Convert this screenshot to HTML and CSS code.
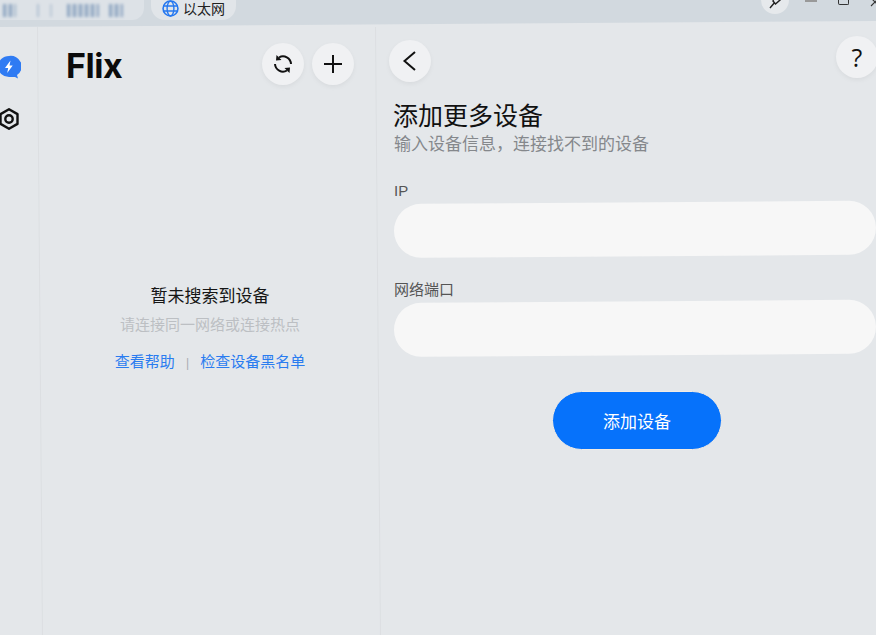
FILE: index.html
```html
<!DOCTYPE html>
<html lang="zh-CN">
<head>
    <meta charset="UTF-8">
    <title>Flix</title>
    <link rel="stylesheet" href="styles.css">
</head>
<body>
    <div class="app">
        <!-- Title bar -->
        <div class="topbar">
            <div class="tray">
                <span class="smudge s1"></span>
                <span class="smudge s2"></span>
                <span class="smudge s3"></span>
                <span class="smudge s4"></span>
                <span class="smudge s5"></span>
            </div>
            <div class="net-pill">
                <svg class="globe" viewBox="0 0 16 16" width="17" height="17">
                    <circle cx="8" cy="8" r="7" fill="none" stroke="#2678f0" stroke-width="1.5"/>
                    <ellipse cx="8" cy="8" rx="3.2" ry="7" fill="none" stroke="#2678f0" stroke-width="1.3"/>
                    <path d="M1 5.6h14M1 10.4h14" stroke="#2678f0" stroke-width="1.3"/>
                </svg>
                <span>以太网</span>
            </div>
            <div class="win-controls">
                <div class="pin">
                    <svg viewBox="0 0 16 16" width="16" height="16">
                        <path d="M9 -2L13 5L8.5 9L6 6ZM7.2 8L3 13" fill="none" stroke="#222" stroke-width="1.4"/>
                    </svg>
                </div>
                <span class="ctl-min"></span>
                <span class="ctl-max"></span>
                <svg class="ctl-close" viewBox="0 0 10 10" width="10" height="10">
                    <path d="M1 -2L9 6M9 -2L1 6" stroke="#333" stroke-width="1.1"/>
                </svg>
            </div>
        </div>

        <div class="main">
            <!-- Left rail -->
            <div class="rail">
                <svg class="rail-icon" viewBox="0 0 24 24" width="24" height="24">
                    <path d="M12 1a11 10.5 0 1 0 0 21h6l3 1.500-1-3.500a11 10.500 0 0 0-8-19z" fill="#2f7bf3"/>
                    <path d="M13.500 5.500L8 13h3.200l-1 5 5.500-7.500h-3.200z" fill="#fff"/>
                </svg>
                <svg class="rail-icon gear" viewBox="0 0 24 24" width="24" height="24">
                    <path d="M12 2.200l8.500 4.900v9.800L12 21.800l-8.500-4.900V7.100z" fill="none" stroke="#111" stroke-width="2.400" stroke-linejoin="round"/>
                    <circle cx="12" cy="12" r="3.700" fill="none" stroke="#111" stroke-width="2.400"/>
                </svg>
            </div>

            <!-- Device list -->
            <div class="devices">
                <div class="devices-head">
                    <div class="logo">Flix</div>
                    <div class="head-btns">
                        <div class="round-btn">
                            <svg viewBox="0 0 24 24" width="24" height="24">
                                <path d="M8 5.500A8 8 0 0 1 20 12M16 18.500A8 8 0 0 1 4 12" fill="none" stroke="#111" stroke-width="2"/>
                                <path d="M5.500 3L5 8.500L10.500 8zM18.500 21L19 15.500L13.500 16z" fill="#111"/>
                            </svg>
                        </div>
                        <div class="round-btn">
                            <svg viewBox="0 0 24 24" width="24" height="24">
                                <path d="M12 3v18M3 12h18" stroke="#111" stroke-width="2"/>
                            </svg>
                        </div>
                    </div>
                </div>
                <div class="empty">
                    <div class="empty-title">暂未搜索到设备</div>
                    <div class="empty-hint">请连接同一网络或连接热点</div>
                    <div class="empty-links">
                        <a href="#">查看帮助</a>
                        <span class="sep">|</span>
                        <a href="#">检查设备黑名单</a>
                    </div>
                </div>
            </div>

            <!-- Add device form -->
            <div class="detail">
                <div class="detail-head">
                    <div class="round-btn">
                        <svg viewBox="0 0 24 24" width="24" height="24">
                            <path d="M17 3L6.500 12L17 21" fill="none" stroke="#111" stroke-width="2"/>
                        </svg>
                    </div>
                    <div class="round-btn help">?</div>
                </div>
                <h1>添加更多设备</h1>
                <p class="sub">输入设备信息，连接找不到的设备</p>
                <label class="field-label">IP</label>
                <div class="field"></div>
                <label class="field-label second">网络端口</label>
                <div class="field second"></div>
                <div class="actions">
                    <button class="add-btn">添加设备</button>
                </div>
            </div>
        </div>
    </div>
</body>
</html>
```

FILE: styles.css
```css
* {
    box-sizing: border-box;
}

html, body {
    margin: 0;
    height: 100%;
    overflow: hidden;
}

body {
    font-family: "Liberation Sans", "Noto Sans CJK SC", sans-serif;
    background-color: #e4e7ea;
    color: #111;
}

.app {
    display: flex;
    flex-direction: column;
    height: 635px;
    width: 876px;
    overflow: hidden;
}

/* Title bar, its lower edge runs slightly uphill */
.topbar {
    display: flex;
    align-items: flex-start;
    height: 27px;
    flex-shrink: 0;
    background-color: #d2d9df;
    overflow: hidden;
    clip-path: polygon(0 0, 100% 0, 100% 21px, 0 27px);
}

.tray {
    display: flex;
    align-items: center;
    gap: 11px;
    width: 144px;
    height: 20px;
    padding-left: 3px;
    background-color: #dde2e7;
    border-radius: 0 0 12px 0;
}

.smudge {
    display: block;
    height: 13px;
    background: repeating-linear-gradient(90deg, #6f8db2 0, #6f8db2 3px, #c9d3dd 3px, #c9d3dd 6px);
    filter: blur(1.5px);
    opacity: 0.7;
}

.s1 { width: 13px; margin-right: 10px; }
.s2 { width: 2px; opacity: 0.4; }
.s3 { width: 2px; opacity: 0.3; margin-right: 4px; }
.s4 { width: 32px; }
.s5 { width: 14px; margin-left: -1px; }

.net-pill {
    display: flex;
    align-items: center;
    gap: 4px;
    height: 20px;
    margin-left: 7px;
    padding: 0 11px;
    background-color: #e1e5e9;
    border-radius: 0 0 14px 14px;
    font-size: 14px;
    color: #222;
}

.globe {
    margin-top: -3px;
}

.net-pill span {
    margin-top: -5px;
}

.win-controls {
    display: flex;
    margin-left: auto;
    align-items: flex-start;
}

.pin {
    display: flex;
    justify-content: center;
    align-items: flex-start;
    width: 28px;
    height: 14px;
    border-radius: 0 0 14px 14px;
    background-color: #e6e9ec;
}

.pin svg {
    margin-top: -5px;
}

.ctl-min {
    width: 12px;
    height: 2px;
    margin-left: 16px;
    background-color: #999;
}

.ctl-max {
    width: 11px;
    height: 5px;
    margin-left: 21px;
    border: 1px solid #333;
    border-top: none;
    border-radius: 0 0 2px 2px;
}

.ctl-close {
    margin: 0 -4px 0 21px;
}

/* Layout */
.main {
    display: flex;
    flex: 1;
    min-height: 0;
}

.rail {
    position: relative;
    display: flex;
    flex-direction: column;
    width: 38px;
    flex-shrink: 0;
    padding-top: 28px;
}

.devices {
    position: relative;
    display: flex;
    flex-direction: column;
    width: 338px;
    flex-shrink: 0;
}

/* the column dividers lean a few pixels to the right */
.rail::after,
.devices::after {
    content: "";
    position: absolute;
    top: 0;
    bottom: 0;
    right: 0;
    width: 1px;
    background-color: #dcdfe2;
    transform: rotate(-0.47deg);
    transform-origin: top;
}

.rail-icon {
    margin-left: -3px;
}

.gear {
    margin-top: 28px;
}

.devices-head {
    display: flex;
    justify-content: space-between;
    align-items: flex-start;
    padding: 16px 22px 0 28px;
}

.logo {
    margin-top: 1px;
    font-family: Inter, "Liberation Sans", sans-serif;
    font-size: 34px;
    font-weight: 700;
    line-height: 44px;
    letter-spacing: -0.5px;
    color: #0b0b0b;
}

.head-btns {
    display: flex;
    gap: 8px;
}

.round-btn {
    display: flex;
    justify-content: center;
    align-items: center;
    width: 42px;
    height: 42px;
    border-radius: 50%;
    background-color: #f0f1f3;
    box-shadow: 0 2px 5px rgba(0, 0, 0, 0.05);
}

.empty {
    margin-top: 197px;
    margin-left: 6px;
    text-align: center;
}

.empty-title {
    font-size: 17px;
    line-height: 24px;
    color: #151515;
}

.empty-hint {
    margin-top: 6px;
    font-size: 15px;
    line-height: 20px;
    color: #bcbfc3;
}

.empty-links {
    margin-top: 17px;
    font-size: 15px;
    line-height: 20px;
}

.empty-links a {
    color: #2a7cf0;
    text-decoration: none;
}

.sep {
    margin: 0 7px;
    color: #a9adb2;
    font-size: 12px;
}

.detail {
    flex: 1;
    min-width: 0;
    padding: 13px 0 0 18px;
}

.detail-head {
    display: flex;
    justify-content: space-between;
    margin: 0 -2px 0 -5px;
}

.help {
    font-family: "Open Sans", sans-serif;
    font-size: 25px;
    margin-top: -4px;
}

h1 {
    margin: 19px 0 0 -1px;
    font-size: 25px;
    font-weight: 400;
    line-height: 30px;
    color: #111;
}

.sub {
    margin: 2px 0 0;
    font-size: 17px;
    line-height: 24px;
    color: #85888c;
}

.field-label {
    display: block;
    margin-top: 24px;
    font-size: 15px;
    line-height: 20px;
    color: #555;
}

.field-label.second {
    margin-top: 22px;
}

.field {
    width: 482px;
    height: 54px;
    margin-top: 3px;
    border-radius: 27px;
    background-color: #f7f7f7;
    transform: rotate(-0.4deg);
    transform-origin: left center;
}

.actions {
    margin-top: 34px;
    padding-left: 158px;
}

.add-btn {
    width: 170px;
    height: 59px;
    border: 1px solid #f3ece4;
    border-radius: 30px;
    background-color: #0672fb;
    color: #fff;
    font-family: inherit;
    font-size: 17px;
}
```
